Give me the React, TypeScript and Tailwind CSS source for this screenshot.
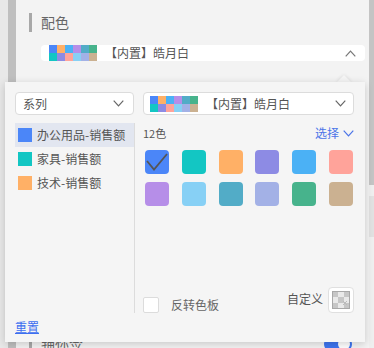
import React from "react";

const FONT = { fontFamily: '"Noto Sans CJK SC", "Noto Sans", sans-serif' };

function Palette() {
  const top = ["#4b86f8", "#ffb067", "#4bb1f5", "#b68ee8", "#52acc7", "#47b38c"];
  const bottom = ["#13c6c3", "#8d8be4", "#ffa39a", "#87d0f5", "#a3b1e6", "#cbb191"];
  return (
    <div className="flex flex-col w-[48px] h-[16px] shrink-0">
      <div className="flex h-[8px]">
        {top.map((c) => (
          <div key={c} className="w-[8px] h-[8px]" style={{ background: c }} />
        ))}
      </div>
      <div className="flex h-[8px]">
        {bottom.map((c) => (
          <div key={c} className="w-[8px] h-[8px]" style={{ background: c }} />
        ))}
      </div>
    </div>
  );
}

function Chevron({ up = false, color = "#777" }: { up?: boolean; color?: string }) {
  return (
    <svg width="11" height="7" viewBox="0 0 11 7" className="shrink-0">
      <path
        d={up ? "M0.7 6.3 L5.5 1.2 L10.3 6.3" : "M0.7 0.7 L5.5 5.8 L10.3 0.7"}
        fill="none"
        stroke={color}
        strokeWidth="1.2"
      />
    </svg>
  );
}

const swatches = [
  "#4b86f8", "#13c6c3", "#ffb066", "#8d8be4", "#4bb1f5", "#ffa39a",
  "#b68ee8", "#87d0f5", "#52acc7", "#a3b1e6", "#47b38c", "#cbb191",
];

const series = [
  { name: "办公用品-销售额", color: "#4b86f8", active: true },
  { name: "家具-销售额", color: "#13c6c3", active: false },
  { name: "技术-销售额", color: "#ffb066", active: false },
];

export default function App() {
  return (
    <div className="relative w-[374px] h-[348px] overflow-hidden flex bg-[#e8e8e8]" style={FONT}>
      <div className="w-[8px] bg-[#e8e8e8]" />
      <div className="w-[8px] bg-[#bfbfbf]" />
      <div className="flex-1 bg-[#f3f3f3] flex flex-col pt-[13px]">
        <div className="flex items-center h-[19px] pl-[13px]">
          <div className="w-[3px] h-[19px] bg-[#a8a8a8]" />
          <span className="ml-[9px] text-[14px] leading-[19px] text-[#666]">配色</span>
        </div>
        <div className="mt-[13px] ml-[25px] mr-[4px] h-[24px] rounded-[4px] bg-white flex items-center pl-[8px] pr-[9px]">
          <Palette />
          <span className="ml-[8px] text-[12px] text-[#555] leading-[16px]">【内置】皓月白</span>
          <div className="flex-1" />
          <Chevron up />
        </div>
        <div className="mt-[271px] flex items-center h-[19px] pl-[13px] pr-[17px]">
          <div className="w-[3px] h-[19px] bg-[#a8a8a8]" />
          <span className="ml-[9px] text-[14px] leading-[19px] text-[#666]">辅标签</span>
          <div className="flex-1" />
          <div className="w-[28px] h-[16px] rounded-full bg-[#3d75f0] flex items-center justify-end pr-[2px] mt-[4px]">
            <div className="w-[12px] h-[12px] rounded-full bg-white" />
          </div>
        </div>
      </div>
      <div className="w-[5px] flex flex-col bg-[#efefef]">
        <div className="h-[185px] bg-[#c4c4c4]" />
        <div className="h-[11px]" />
        <div className="h-[41px] bg-[#e1e1e1]" />
      </div>

      {/* popup arrow */}
      <div className="absolute left-[339px] top-[77px] w-[10px] h-[10px] rotate-45 bg-[#f5f5f5] shadow-[0_0_4px_rgba(0,0,0,0.12)]" />

      {/* popup */}
      <div className="absolute left-[5px] top-[82px] w-[360px] h-[260px] bg-[#f5f5f5] shadow-[0_2px_8px_rgba(0,0,0,0.18)] pt-[10px] px-[10px] flex flex-col">
        <div className="flex gap-[9px] h-[23px] shrink-0">
          <div className="w-[119px] h-[23px] border border-[#dcdcdc] rounded-[4px] bg-white flex items-center pl-[7px] pr-[9px]">
            <span className="text-[12px] text-[#555] leading-[16px]">系列</span>
            <div className="flex-1" />
            <Chevron color="#666" />
          </div>
          <div className="w-[211px] h-[23px] border border-[#dcdcdc] rounded-[4px] bg-white flex items-center pl-[6px] pr-[7px]">
            <Palette />
            <span className="ml-[8px] text-[12px] text-[#555] leading-[16px]">【内置】皓月白</span>
            <div className="flex-1" />
            <Chevron color="#666" />
          </div>
        </div>

        <div className="mt-[8px] flex h-[190px] shrink-0">
          <div className="w-[120px] border-r border-[#dcdcdc] flex flex-col">
            {series.map((s) => (
              <div
                key={s.name}
                className={
                  "h-[24px] flex items-center pl-[3px] gap-[5px] " + (s.active ? "bg-[#e2e6f0]" : "")
                }
              >
                <div className="w-[14px] h-[14px]" style={{ background: s.color }} />
                <span className="text-[12px] text-[#555] leading-[16px]">{s.name}</span>
              </div>
            ))}
          </div>
          <div className="flex-1 flex flex-col pl-[8px] pr-[1px]">
            <div className="h-[20px] flex items-center justify-between">
              <span className="text-[11px] text-[#555] leading-[14px]">12色</span>
              <span className="flex items-center gap-[4px] text-[12px] text-[#4a74e8] leading-[16px]">
                选择
                <Chevron color="#4a74e8" />
              </span>
            </div>
            <div className="mt-[7px] ml-[2px] w-[208px] grid grid-cols-6 gap-x-[12.8px] gap-y-[8px]">
              {swatches.map((c, i) => (
                <div
                  key={c}
                  className="w-[24px] h-[24px] rounded-[4px] flex items-center justify-center"
                  style={{ background: c }}
                >
                  {i === 0 && (
                    <svg width="24" height="24" viewBox="0 0 24 24">
                      <path d="M2 11 L9 19.5 L22 4" fill="none" stroke="#555" strokeWidth="1.8" />
                    </svg>
                  )}
                </div>
              ))}
            </div>
            <div className="flex-1" />
            <div className="flex items-end">
              <div className="w-[16px] h-[16px] border border-[#dcdcdc] rounded-[2px] bg-white" />
              <span className="ml-[12px] text-[12px] text-[#666] leading-[16px]">反转色板</span>
              <div className="flex-1" />
              <div className="flex items-center gap-[5px]">
                <span className="text-[12px] text-[#555] leading-[16px] mb-[3px]">自定义</span>
                <div className="w-[26px] h-[26px] rounded-[4px] border border-[#e0e0e0] bg-white flex items-center justify-center">
                  <svg width="18" height="18" viewBox="0 0 18 18">
                    <rect x="0" y="0" width="18" height="18" fill="#e9e9e9" />
                    <rect x="0" y="0" width="6" height="6" fill="#c6c6c6" />
                    <rect x="12" y="0" width="6" height="6" fill="#c6c6c6" />
                    <rect x="6" y="6" width="6" height="6" fill="#c6c6c6" />
                    <rect x="0" y="12" width="6" height="6" fill="#c6c6c6" />
                    <rect x="12" y="12" width="6" height="6" fill="#c6c6c6" />
                    <path d="M11 10 L15 14 M15 10 L11 14" stroke="#bbb" strokeWidth="1" />
                    <rect x="0.5" y="0.5" width="17" height="17" fill="none" stroke="#a8a8a8" strokeWidth="1" />
                  </svg>
                </div>
              </div>
            </div>
          </div>
        </div>

        <div className="mt-[5px] h-[17px] shrink-0 text-[12px] leading-[17px]">
          <span className="text-[#3d6ff0] underline">重置</span>
        </div>
      </div>
    </div>
  );
}
